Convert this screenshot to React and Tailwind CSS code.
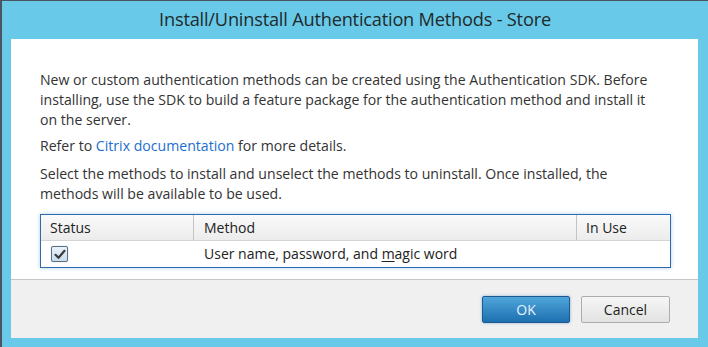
export default function App() {
  const font = { fontFamily: '"Open Sans", "Noto Sans", sans-serif' };
  return (
    <div
      className="w-[708px] h-[347px] bg-[#69c9e8] border-l-2 border-t border-[#4b5561] flex flex-col overflow-hidden"
      style={font}
    >
      <div className="h-[38px] flex items-center justify-center text-[18.2px] text-[#1f2a2a] tracking-[-0.2px]">
        Install/Uninstall Authentication Methods - Store
      </div>
      <div className="ml-[9px] w-[687px] flex flex-col">
        <div className="bg-white h-[241px] pt-[31px] pl-[29px] pr-[10px] text-[14.1px] text-[#333] leading-[20px] border-b border-[#c6c6c6] whitespace-nowrap">
          <p>
            New or custom authentication methods can be created using the Authentication SDK. Before
            <br />
            installing, use the SDK to build a feature package for the authentication method and install it
            <br />
            on the server.
          </p>
          <p className="mt-[6px]">
            Refer to <span className="text-[#1c6fd0]">Citrix documentation</span> for more details.
          </p>
          <p className="mt-[8px]">
            Select the methods to install and unselect the methods to uninstall. Once installed, the
            <br />
            methods will be available to be used.
          </p>
          <div className="mt-[10px] w-[631px] border border-[#2b6cae] shadow-[0_0_4px_rgba(80,150,210,0.45)] bg-white text-[14px]">
            <div className="flex h-[26px] bg-gradient-to-b from-[#fafafa] to-[#ececec] border-b border-[#d5d5d5] text-[#222]">
              <div className="w-[153px] pl-[9px] flex items-center border-r border-[#c3c3c3]">Status</div>
              <div className="w-[383px] pl-[10px] flex items-center border-r border-[#c3c3c3]">Method</div>
              <div className="flex-1 pl-[9px] flex items-center">In Use</div>
            </div>
            <div className="flex h-[26px] text-[#222]">
              <div className="w-[153px] pl-[10px] flex items-center">
                <div className="w-[17px] h-[16px] rounded-[2px] border border-[#5b6e82] bg-gradient-to-b from-[#e9f3fb] to-[#c6dcee] flex items-center justify-center shadow-[0_0_1px_rgba(40,80,120,0.5)]">
                  <svg width="12" height="11" viewBox="0 0 12 11">
                    <path d="M1.5 5.8 L4.5 8.8 L10.5 1.8" fill="none" stroke="#3a3a3a" strokeWidth="2.2" strokeLinecap="round" strokeLinejoin="round" />
                  </svg>
                </div>
              </div>
              <div className="w-[383px] pl-[10px] flex items-center">
                User name, password, and&nbsp;<span className="underline underline-offset-2">m</span>agic word
              </div>
              <div className="flex-1"></div>
            </div>
          </div>
        </div>
        <div className="bg-[#f0f0f0] h-[58px] flex justify-end items-start pt-[16px] pr-[28px] gap-[11px] text-[14px]">
          <button className="w-[88px] h-[27px] rounded-[2px] border border-[#1e5a8f] bg-gradient-to-b from-[#4fa6da] to-[#1d70b0] text-[#e6f3ff] shadow-[0_0_3px_rgba(40,110,180,0.5)] flex items-center justify-center">
            OK
          </button>
          <button className="w-[89px] h-[27px] rounded-[2px] border border-[#adadad] bg-gradient-to-b from-[#f6f6f6] to-[#e2e2e2] text-[#1e1e1e] flex items-center justify-center">
            Cancel
          </button>
        </div>
      </div>
    </div>
  );
}
